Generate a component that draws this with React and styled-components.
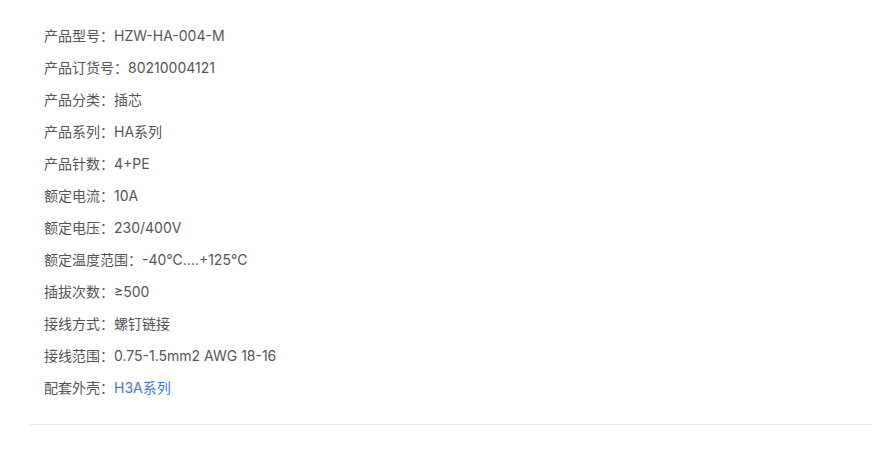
import React from 'react';
import styled, { createGlobalStyle } from 'styled-components';

const GlobalStyle = createGlobalStyle`
    body {
        margin: 0;
        background: #fff;
        font-family: Inter, "Noto Sans CJK SC", sans-serif;
    }
`;

const Wrap = styled.div`
    padding: 20px 0 0 30px;
`;

const Specs = styled.ul`
    list-style: none;
    margin: 0;
    padding: 0 0 20px 14px;
    border-bottom: 1px solid #e8e8e8;
`;

const Row = styled.li`
    height: 32px;
    line-height: 32px;
    font-size: 14px;
    color: #555;
    white-space: nowrap;
`;

const Value = styled.span`
    color: ${props => (props.$link ? '#3a7ad5' : '#555')};
`;

const specs = [
    ['产品型号', 'HZW-HA-004-M'],
    ['产品订货号', '80210004121'],
    ['产品分类', '插芯'],
    ['产品系列', 'HA系列'],
    ['产品针数', '4+PE'],
    ['额定电流', '10A'],
    ['额定电压', '230/400V'],
    ['额定温度范围', '-40℃....+125℃'],
    ['插拔次数', '≥500'],
    ['接线方式', '螺钉链接'],
    ['接线范围', '0.75-1.5mm2 AWG 18-16'],
    ['配套外壳', 'H3A系列', true],
];

const App = () => {
    return (
        <Wrap>
            <GlobalStyle />
            <Specs>
                {specs.map(([label, value, link]) => (
                    <Row key={label}>
                        {label}：<Value $link={link}>{value}</Value>
                    </Row>
                ))}
            </Specs>
        </Wrap>
    );
};

export default App;
